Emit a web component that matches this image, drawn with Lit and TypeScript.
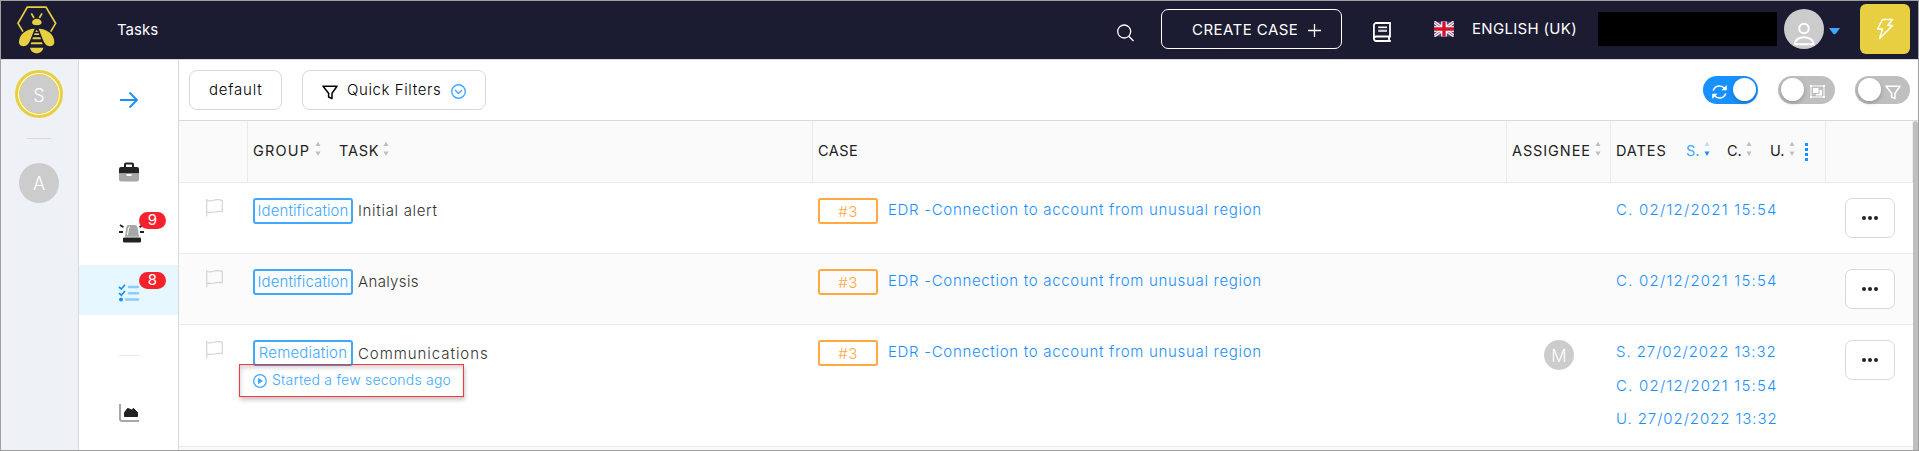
import { LitElement, html, css, svg, nothing } from "lit";
import { customElement, property } from "lit/decorators.js";
import { classMap } from "lit/directives/class-map.js";

interface DateEntry { text: string; cls: string }
interface Task {
  group: string; groupCls: string; name: string; nameCls: string;
  dates: DateEntry[]; started?: string; assignee?: string;
}

const CREATED: DateEntry = { text: "C. 02/12/2021 15:54", cls: "created" };
const TASKS: Task[] = [
  { group: "Identification", groupCls: "ident", name: "Initial alert", nameCls: "initial", dates: [CREATED] },
  { group: "Identification", groupCls: "ident", name: "Analysis", nameCls: "analysis", dates: [CREATED] },
  {
    group: "Remediation", groupCls: "remed", name: "Communications", nameCls: "comms",
    started: "Started a few seconds ago", assignee: "M",
    dates: [
      { text: "S. 27/02/2022 13:32", cls: "started-on" }, CREATED,
      { text: "U. 27/02/2022 13:32", cls: "started-on" },
    ],
  },
];

const funnel = svg`<path d="M1 1.2H15L10 8.2V13.6L6.6 12V8.2Z" fill="none" stroke="currentColor" stroke-width="1.5" stroke-linejoin="round"/>`;

@customElement("sort-arrows")
class SortArrows extends LitElement {
  @property({ type: Boolean }) active = false;
  static styles = css`
    :host { display: block; width: 6px; height: 16px; }
    svg { display: block; }
    .up, .down { fill: #bfbfbf; }
    .on .up { fill: #bae0ff; }
    .on .down { fill: #1890ff; }
  `;
  render() {
    return html`<svg class=${classMap({ on: this.active })} width="6" height="16" viewBox="0 0 6 16">
      <path class="up" d="M3 0.5L5.5 5H0.5Z"/><path class="down" d="M3 15L5.5 10.5H0.5Z"/></svg>`;
  }
}

@customElement("app-header")
class AppHeader extends LitElement {
  static styles = css`
    :host { display: flex; height: 58px; background: #1b1b32; color: #fff; border-bottom: 1px solid #d9d9d9;
      font: 400 15px/20px Inter, sans-serif; }
    svg { display: block; flex: none; }
    .logo { margin: 5px 0 0 16px; }
    .title { margin: 19px auto 0 60px; }
    .search { margin: 23px 27px 0 0; }
    .create { box-sizing: border-box; width: 181px; height: 40px; margin: 8px 31px 0 0; border: 1px solid #fff;
      border-radius: 7px; display: flex; padding: 10px 0 0 30px; letter-spacing: .45px; }
    .create svg { margin: 4px 0 0 10px; }
    .book { margin: 21px 43px 0 0; }
    .flag { margin: 20px 18px 0 0; }
    .lang { margin: 18px 0 0; width: 108px; letter-spacing: .32px; white-space: nowrap; }
    .mask { width: 179px; height: 34px; background: #000; margin: 11px 7px 0 18px; }
    .user { margin: 8px 5px 0 0; }
    .caret { margin: 26px 20px 0 0; }
    .flash { width: 50px; height: 50px; border-radius: 6px; background: #e8cf41; margin: 3px 8px 0 0; }
  `;
  render() {
    return html`
      <svg class="logo" width="40" height="48" viewBox="51 17 120 144">
        <g fill="none" stroke="#e8cf41" stroke-width="5">
          <path d="M69 94L54 69L82 20.500H138L167 69L152 94"/>
          <path d="M94 39L102 53M126 39L118 53"/>
        </g>
        <g fill="#e8cf41">
          <path d="M96 67C97 51 124 51 125 67C124 77 97 77 96 67Z"/>
          <path d="M104 85C84 84 55 100 57 128C60 140 78 142 86 129C93 116 98 100 104 85Z"/>
          <path d="M116 85C136 84 165 100 163 128C160 140 142 142 134 129C127 116 122 100 116 85Z"/>
          <path d="M110 88L114 95H106Z"/><path d="M104 99H116L118 104H102Z"/>
          <path d="M99 111H121L123 117H97Z"/><path d="M94 126H126L128 132H92Z"/>
          <path d="M90 142H130C128 153 118 159 110 159C102 159 92 153 90 142Z"/>
        </g>
      </svg>
      <div class="title">Tasks</div>
      <svg class="search" width="17" height="18" viewBox="0 0 17 18" fill="none" stroke="#fff" stroke-width="1.3">
        <circle cx="7.200" cy="7.500" r="6.500"/><path d="M11.800 12.200L16.500 17"/></svg>
      <div class="create">CREATE CASE
        <svg width="13" height="13" viewBox="0 0 13 13" stroke="#fff" stroke-width="1.3"><path d="M6.500 0V13M0 6.500H13"/></svg>
      </div>
      <svg class="book" width="18" height="20" viewBox="0 0 18 20" fill="none" stroke="#fff" stroke-width="1.800">
        <path d="M16 14.500V19M17.800 19H3.500A2.500 2.500 0 0 1 .9 16.700V3.500A2.500 2.500 0 0 1 3.500 1H17V14.500H3.500A2.300 2.300 0 0 0 .9 16.700"/>
        <path d="M5.200 5.300H14M5.200 9H14" stroke-width="1.500"/><path d="M5.200 7.200H14" stroke-width="1" opacity=".4"/></svg>
      <svg class="flag" width="20" height="16" viewBox="0 0 20 16">
        <path d="M0 1Q10 0 20 1V15Q10 16 0 15Z" fill="#3a4f94"/>
        <path d="M0 1L20 15M20 1L0 15" stroke="#f3eef2" stroke-width="3.400"/>
        <path d="M0 1L20 15M20 1L0 15" stroke="#d5545f" stroke-width="1"/>
        <path d="M10 .5V15.500M0 8H20" stroke="#fff" stroke-width="5.600"/>
        <path d="M10 .5V15.500M0 8H20" stroke="#d3142c" stroke-width="3.400"/></svg>
      <div class="lang">ENGLISH (UK)</div>
      <div class="mask"></div>
      <svg class="user" width="40" height="40" viewBox="0 0 40 40">
        <circle cx="20" cy="20" r="20" fill="#ccc"/>
        <g fill="none" stroke="#fff" stroke-width="2"><circle cx="20" cy="19.500" r="4.800"/>
        <path d="M11 35.300C10 26 30 26 29.500 35.300Z" stroke-linejoin="round"/></g></svg>
      <svg class="caret" width="11" height="8" viewBox="0 0 11 8"><path d="M0 1H11L7 6.500Q5.500 7.800 4 6.500Z" fill="#40a9ff"/></svg>
      <div class="flash"><svg width="50" height="50" viewBox="0 0 50 50">
        <path d="M22.500 15.500H32.500L27.800 21.500H32.500L19.500 34.500L22.500 25H17.500Z" fill="none" stroke="#fff" stroke-width="1.500" stroke-linejoin="round"/></svg></div>
    `;
  }
}

@customElement("org-rail")
class OrgRail extends LitElement {
  static styles = css`
    :host { display: flex; flex-direction: column; align-items: center; width: 78px; box-sizing: border-box; padding: 10px 1px 0 0;
      background: #eef1f5; border-right: 1px solid #d9d9d9; flex: none; color: #fff; font: 300 18px/42px Inter, sans-serif; }
    .ring { border: 3px solid #e8cf41; border-radius: 50%; padding: 1px; background: #fff; }
    .thin { border: 1px solid #e8cf41; }
    .org { width: 38px; height: 38px; border-radius: 50%; background: #ccc; text-align: center; }
    .plain { width: 40px; height: 40px; }
    hr { width: 24px; height: 1px; border: 0; background: #d9d9d9; margin: 20px 0 24px; }
  `;
  render() {
    return html`<div class="ring"><div class="org thin">S</div></div><hr><div class="org plain">A</div>`;
  }
}

@customElement("side-menu")
class SideMenu extends LitElement {
  static styles = css`
    :host { display: flex; flex-direction: column; width: 100px; box-sizing: border-box; background: #fff;
      border-right: 1px solid #d9d9d9; flex: none; color: #fff; }
    .item { position: relative; height: 50px; flex: none; display: flex; justify-content: center; align-items: center; }
    .first { height: 80px; margin-bottom: 7px; }
    .gap { margin-bottom: 9px; }
    .alerts { margin-bottom: 9px; }
    .active { background: #e6f7ff; }
    .badge { position: absolute; left: 60px; top: 7px; width: 27px; height: 17px; border-radius: 9px; background: #f5222d;
      text-align: center; font: 400 15px/16px Inter, sans-serif; }
    .alerts .badge { top: 6px; }
    .alarm { margin: 4px 0 0 5px; }
    .list { margin-top: 6px; }
    hr { width: 20px; height: 1px; border: 0; background: #e8e8e8; margin: 40px auto 32px; flex: none; }
    svg { display: block; overflow: visible; }
  `;
  render() {
    return html`
      <div class="item first"><svg width="18" height="18" viewBox="0 0 18 18" fill="none" stroke="#1890ff" stroke-width="1.800" stroke-linejoin="round">
        <path d="M0 9H17M9.500 1.500L17 9L9.500 16.500"/></svg></div>
      <div class="item gap"><svg width="20" height="20" viewBox="0 0 20 20">
        <path d="M5 5V2.500Q5 .5 7 .5H13Q15 .5 15 2.500V5H18Q20 5 20 7V11.500H0V7Q0 5 2 5ZM7 2.500V5H13V2.500Z" fill="#222" fill-rule="evenodd"/>
        <path d="M0 11.500H7.500V14H12.500V11.500H20V17.500Q20 19.500 18 19.500H2Q0 19.500 0 17.500Z" fill="#a7a7a7"/></svg></div>
      <div class="item alerts"><svg class="alarm" width="25" height="20" viewBox="0 0 25 20">
        <rect x="4" y="14.500" width="18" height="5" rx="1" fill="#222"/>
        <path d="M6 13.700L7.300 4Q7.600 2 10 2H16Q18 2 18.500 4L20 13.700Z" fill="#a7a7a7"/>
        <path d="M8.500 12L9.500 5Q9.700 4 11 4" stroke="#fff" fill="none"/>
        <path d="M0 9H4M21 9H25M1 2L4.500 4.300M24 2L20.500 4.300" stroke="#222" stroke-width="1.800"/></svg>
        <span class="badge">9</span></div>
      <div class="item active"><svg class="list" width="20" height="18" viewBox="0 0 20 18">
        <path d="M0 2.800L2.300 5L6 .8M0 9L2.300 11.200L6 7" fill="none" stroke="#1890ff" stroke-width="1.700"/>
        <circle cx="2" cy="15.500" r="2" fill="#1890ff"/>
        <path d="M10 3H19M10 9.200H19M7 15.500H19" stroke="#8dcbff" stroke-width="2.400" stroke-linecap="round"/></svg>
        <span class="badge">8</span></div>
      <hr>
      <div class="item"><svg width="20" height="18" viewBox="0 0 20 18">
        <path d="M1 0V14.500Q1 17 3 17H20" stroke="#a7a7a7" stroke-width="2" fill="none"/>
        <path d="M5.500 12.500V8.500L8.500 4.500L10.500 5L12.500 6L14.500 4.500L18.500 8.500V12.500Z" fill="#222" stroke="#222" stroke-linejoin="round"/></svg></div>
    `;
  }
}

@customElement("view-toolbar")
class ViewToolbar extends LitElement {
  static styles = css`
    :host { display: flex; height: 60px; border-bottom: 1px solid #d9d9d9; background: #fff; color: #000;
      font: 300 15px/20px Inter, sans-serif; }
    .btn { box-sizing: border-box; height: 40px; margin-top: 10px; border: 1px solid #d9d9d9; border-radius: 8px; display: flex; padding: 9px 0 0; }
    .view { width: 93px; margin-left: 10px; padding-left: 19px; letter-spacing: .8px; }
    .quick { width: 184px; margin-left: 20px; padding-left: 19px; margin-right: auto; letter-spacing: .6px; }
    .quick span { width: 104px; margin-left: 9px; white-space: nowrap; }
    .quick .funnel { margin-top: 5px; }
    .quick .chev { margin-top: 4px; }
    .toggle { box-sizing: border-box; width: 55px; height: 28px; border-radius: 14px; background: #bfbfbf; margin: 16px 20px 0 0; display: flex;
      align-items: center; padding: 0 9px 0 3px; justify-content: space-between; color: #fff; }
    .wide { width: 57px; padding-right: 10px; }
    .last { margin-right: 8px; }
    .on { background: #1890ff; padding: 0 2px 0 9px; }
    .knob { width: 23px; height: 23px; margin-top: -1px; border-radius: 50%; background: #fff; box-shadow: 0 2px 4px rgba(0,35,11,.25); }
    svg { display: block; flex: none; overflow: visible; }
    .toggle svg { margin-top: 3px; }
  `;
  render() {
    return html`
      <div class="btn view">default</div>
      <div class="btn quick">
        <svg class="funnel" width="16" height="14" viewBox="0 0 16 14">${funnel}</svg><span>Quick Filters</span>
        <svg class="chev" width="15" height="15" viewBox="0 0 15 15" fill="none" stroke="#40a9ff" stroke-width="1.400">
          <circle cx="7.500" cy="7.500" r="6.800"/><path d="M4 6L7.500 9.500L11 6"/></svg>
      </div>
      <div class="toggle on"><svg width="15" height="14" viewBox="0 0 15 14" fill="none" stroke="#fff" stroke-width="1.600">
        <path d="M1.200 5.500Q3 1 7.500 1Q10.500 1 12.800 3.500M13.800 8.500Q12 13 7.500 13Q4.500 13 2.200 10.500"/>
        <path d="M14.800 0V5.300H9.500ZM.2 14V8.700H5.500Z" fill="#fff" stroke="none"/></svg><span class="knob"></span></div>
      <div class="toggle wide"><span class="knob"></span><svg width="15" height="13" viewBox="0 0 15 13">
        <path d="M1 1H14V12H1Z" fill="none" stroke="#fff"/>
        <path d="M0 0H2V2H0ZM13 0H15V2H13ZM0 11H2V13H0ZM13 11H15V13H13Z" fill="#fff"/>
        <path d="M3 3H8.500V8H3ZM9.500 5H12V10.500H6V9H9.500Z" fill="#fff"/></svg></div>
      <div class="toggle last"><span class="knob"></span><svg width="16" height="14" viewBox="0 0 16 14">${funnel}</svg></div>
    `;
  }
}

@customElement("task-table")
class TaskTable extends LitElement {
  static styles = css`
    :host { display: block; flex: 1; overflow: hidden; font: 300 15px/20px Inter, sans-serif; color: #333; background: #fafafa; }
    .row { display: grid; grid-template-columns: 69px 565px 694px 104px 215px 87px; box-sizing: border-box; border-bottom: 1px solid #ebebeb; background: #fff; min-height: 71px; }
    .row:nth-child(odd) { background: #fbfbfb; }
    .row:last-child { background: #fff; min-height: 122px; }
    .row:nth-child(2) { background: #fff; }
    .row.head { min-height: 0; height: 62px; background: #fafafa; font-weight: 400; font-size: 14.500px; color: #222; }
    .head > div { display: flex; border-right: 1px solid #ebebeb; padding: 20px 0 0 5px; white-space: nowrap; }
    .w62 { width: 62px; letter-spacing: 1.200px; }
    .task { width: 44px; margin-left: 18px; letter-spacing: .75px; }
    .case { letter-spacing: .5px; }
    .assignee { width: 83px; letter-spacing: .9px; }
    .dates { width: 70px; letter-spacing: .9px; }
    .s { width: 18px; color: #40a9ff; }
    .c { width: 19px; margin-left: 17px; }
    .u { width: 19px; margin-left: 18px; }
    .more { margin: 2px 0 0 10px; }
    .flag { margin: 16px 0 0 27px; }
    svg { display: block; }
    .line { display: flex; padding: 15px 0 0 5px; }
    .tag { box-sizing: border-box; height: 26px; border: 2px solid #40a9ff; border-radius: 3px; color: #40a9ff; text-align: center; line-height: 21px; white-space: nowrap; }
    .group { width: 100px; }
    .ident { letter-spacing: .1px; }
    .remed { letter-spacing: .2px; line-height: 22px; }
    .name { margin: 3px 0 0 5px; }
    .initial { letter-spacing: .68px; }
    .analysis { letter-spacing: .35px; }
    .comms { letter-spacing: .95px; margin-top: 4px; }
    .num { width: 60px; border-color: #ffa940; color: #ffa940; line-height: 23px; letter-spacing: .4px; }
    .link { color: #1890ff; margin: 2px 0 0 10px; letter-spacing: .69px; }
    .started { box-sizing: border-box; display: flex; width: 225px; height: 33px; margin: -2px 0 49px -9px; padding: 5px 0 0 13px; position: relative;
      border: 1px solid #f5383c; color: #40a9ff; font-size: 14px; letter-spacing: .22px; box-shadow: 1px 3px 4px rgba(0,0,0,.22), inset 1px 3px 4px rgba(0,0,0,.16); }
    .started svg { margin: 4px 5px 0 0; }
    .assn { padding: 15px 0 0 37px; }
    .avatar { width: 30px; height: 30px; border-radius: 50%; background: #ccc; color: #fff; text-align: center; font-size: 17px; line-height: 32px; }
    .datelist { padding: 17px 0 0 5px; color: #1890ff; display: flex; flex-direction: column; gap: 13.500px; white-space: nowrap; }
    .created { letter-spacing: 1.220px; }
    .started-on { letter-spacing: .92px; }
    .act { box-sizing: border-box; width: 50px; height: 40px; margin: 15px 0 0 19px; border: 1px solid #d9d9d9; border-radius: 7px; background: #fff;
      display: flex; justify-content: center; align-items: center; gap: 2px; }
    .act i { width: 4px; height: 4px; border-radius: 50%; background: #222; }
  `;
  row(t: Task) {
    return html`<div class="row">
      <svg class="flag" width="17" height="18" viewBox="0 0 17 18" fill="none" stroke="#d4d4d4" stroke-width="1.200">
        <path d="M.7 0V17.500M.7 1.500Q4 2.500 7.500 1.300Q11 0 16.300 1.300V12.700Q12 11.800 8.500 13Q5 14 .7 12.800"/></svg>
      <div>
        <div class="line"><div class="tag group ${t.groupCls}">${t.group}</div><div class="name ${t.nameCls}">${t.name}</div></div>
        ${t.started ? html`<div class="started"><svg width="14" height="14" viewBox="0 0 14 14">
          <circle cx="7" cy="7" r="6.300" fill="none" stroke="#40a9ff" stroke-width="1.300"/><path d="M5 3.800L10 7L5 10.200Z" fill="#40a9ff"/></svg>${t.started}</div>` : nothing}
      </div>
      <div class="line"><div class="tag num">#3</div><div class="link">EDR -Connection to account from unusual region</div></div>
      <div class="assn">${t.assignee ? html`<div class="avatar">${t.assignee}</div>` : nothing}</div>
      <div class="datelist">${t.dates.map(d => html`<span class=${d.cls}>${d.text}</span>`)}</div>
      <div class="act"><i></i><i></i><i></i></div>
    </div>`;
  }
  render() {
    return html`
      <div class="row head">
        <div></div>
        <div><span class="w62">GROUP</span><sort-arrows></sort-arrows><span class="task">TASK</span><sort-arrows></sort-arrows></div>
        <div><span class="case">CASE</span></div>
        <div><span class="assignee">ASSIGNEE</span><sort-arrows></sort-arrows></div>
        <div><span class="dates">DATES</span><span class="s">S.</span><sort-arrows active></sort-arrows><span class="c">C.</span><sort-arrows></sort-arrows><span class="u">U.</span><sort-arrows></sort-arrows>
          <svg class="more" width="3" height="18" viewBox="0 0 3 18" fill="#1890ff"><path d="M0 0H3V3H0ZM0 5H3V8H0ZM0 10H3V13H0ZM0 15H3V18H0Z"/></svg></div>
        <div></div>
      </div>
      ${TASKS.map(t => this.row(t))}
    `;
  }
}

@customElement("app-root")
class AppRoot extends LitElement {
  static styles = css`
    :host { display: flex; flex-direction: column; box-sizing: border-box; width: 1919px; height: 451px; border: 1px solid #a0a0a0; background: #fff; overflow: hidden; }
    app-header { flex: none; }
    .body { display: flex; flex: 1; min-height: 0; }
    main { flex: 1; min-width: 0; display: flex; flex-direction: column; }
    .scroll { display: flex; flex: 1; min-height: 0; }
    .bar { width: 5px; background: #bfbfbf; border-radius: 3px 3px 0 0; flex: none; }
  `;
  render() {
    return html`<app-header></app-header>
      <div class="body"><org-rail></org-rail><side-menu></side-menu>
        <main><view-toolbar></view-toolbar><div class="scroll"><task-table></task-table><div class="bar"></div></div></main>
      </div>`;
  }
}
